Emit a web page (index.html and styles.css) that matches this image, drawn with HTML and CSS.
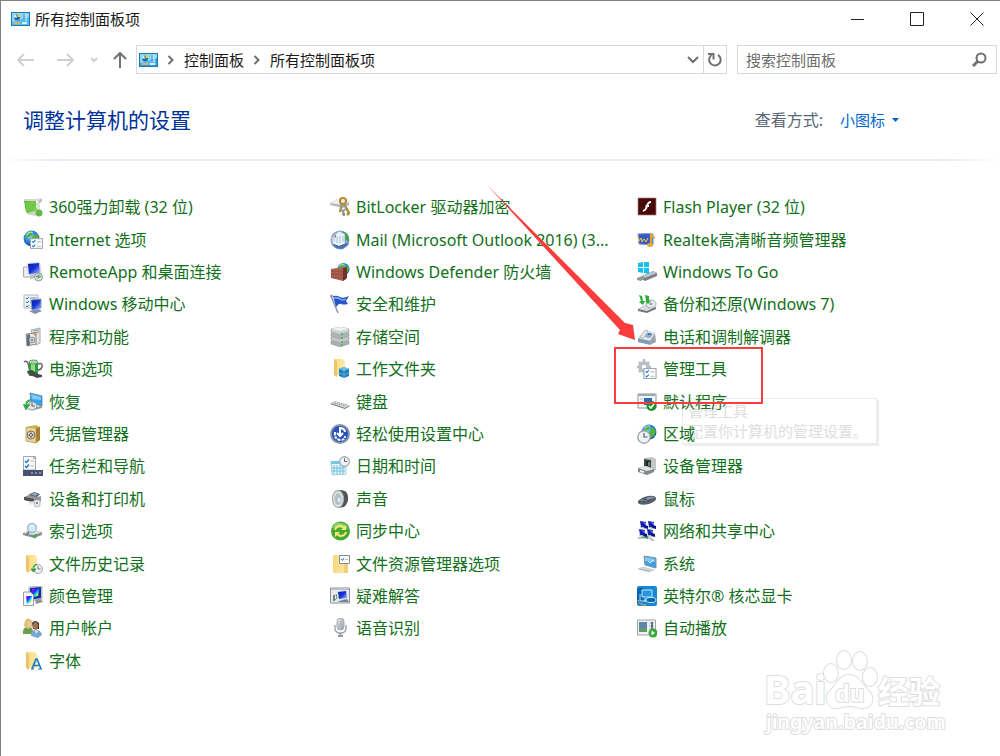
FILE: index.html
```html
<!DOCTYPE html>
<html lang="zh-CN">
<head>
  <meta charset="UTF-8">
  <meta name="viewport" content="width=device-width, initial-scale=1.0">
  <title>所有控制面板项</title>
  <link rel="stylesheet" href="styles.css">
</head>
<body>
  <!-- shared gradients and symbols -->
  <svg class="defs" aria-hidden="true">
    <defs>
      <linearGradient id="folder" x1="0" x2="1"><stop offset="0" stop-color="#f8d980"/><stop offset="1" stop-color="#ffe9a8"/></linearGradient>
      <linearGradient id="metal" x1="0" y1="0" x2="1" y2="1"><stop offset="0" stop-color="#f4f4f4"/><stop offset="1" stop-color="#8b9094"/></linearGradient>
      <linearGradient id="screen" x1="0" y1="0" x2="1" y2="1"><stop offset="0" stop-color="#0b1c9e"/><stop offset=".5" stop-color="#1734d8"/><stop offset="1" stop-color="#b9c9ff"/></linearGradient>
      <radialGradient id="globe" cx=".4" cy=".35" r=".7"><stop offset="0" stop-color="#9be0ff"/><stop offset=".5" stop-color="#2f83dc"/><stop offset="1" stop-color="#123f9c"/></radialGradient>
      <linearGradient id="rainbow" x1="0" y1="0" x2="1" y2="1"><stop offset="0" stop-color="#f0f"/><stop offset=".35" stop-color="#22f"/><stop offset=".6" stop-color="#0ee"/><stop offset=".8" stop-color="#fe0"/><stop offset="1" stop-color="#f33"/></linearGradient>
    </defs>
    <symbol id="panel" viewBox="0 0 19 14">
      <rect x=".5" y=".5" width="18" height="13" fill="#56bdf3" stroke="#1979b5"/>
      <path d="M1 1h17v4L1 10z" fill="#8ed6fa"/>
      <circle cx="6" cy="5.5" r="3" fill="#1e6fb4"/><path d="M6.500 5V2A3 3 0 0 1 9.500 5z" fill="#ffc62e"/><path d="M6 5.500H3A3 3 0 0 1 5 2.500z" fill="#e9f7ff"/>
      <path d="M12 3h4M12 5.500h4M12 8h4" stroke="#e9f7ff" stroke-width="1"/><path d="M13 2v7" stroke="#2b7fbf" stroke-width="1"/>
      <path d="M3 11h6" stroke="#ffb62e" stroke-width="1.500"/><path d="M11 11h5" stroke="#fff" stroke-width="1.500"/>
    </symbol>
    <symbol id="earth" viewBox="0 0 14 14">
      <circle cx="7" cy="7" r="6.500" fill="url(#globe)"/>
      <path d="M3 3l3-2 2 1-1 3-3 1-2 2zM8 5l3-2 2 3-1 4-3 2-2-3z" fill="#4fb53c"/>
      <path d="M3 4q2-3 5-2" stroke="#fff" stroke-opacity=".6" fill="none"/>
    </symbol>
    <symbol id="clock" viewBox="0 0 12 12">
      <circle cx="6" cy="6" r="5.300" fill="#eef2f4" stroke="#9aa5ab" stroke-width="1.200"/>
      <path d="M6 2.500V6H9" fill="none" stroke="#52606a"/>
    </symbol>
    <symbol id="list" viewBox="0 0 12 10">
      <rect x=".5" y=".5" width="11" height="9" fill="#fff" stroke="#a0a8ac"/>
      <path d="M2 3l1 1 2-2M2 7l1 1 2-2" fill="none" stroke="#1778d2"/><path d="M6.500 3.500H10M6.500 7.500H10" stroke="#b4bbc0"/>
    </symbol>
    <symbol id="monitor" viewBox="0 0 12 12">
      <path d="M.5 1l11-.5v8L2 9z" fill="#d9dde0" stroke="#8e969c" stroke-width=".6"/><path d="M1.500 2l9-.5v6L2.500 8z" fill="url(#screen)"/><path d="M5 9h3l1.500 2.500h-6z" fill="#a5acb1"/>
    </symbol>
    <symbol id="netpc" viewBox="0 0 8 8">
      <path d="M0 0l6 1v6L1 6z" fill="#1520b0"/><path d="M3 1l3 1v3z" fill="#6b82ee"/><path d="M5 4l3 1v3L4 7z" fill="#0c1580"/><path d="M0 6l5 1.500" stroke="#b4bbcf"/>
    </symbol>
  </svg>

  <div class="window">
    <header class="titlebar">
      <svg class="panel-icon"><use href="#panel"/></svg>
      <span class="title">所有控制面板项</span>
      <div class="window-buttons">
        <button type="button" aria-label="最小化"><svg viewBox="0 0 14 14"><path d="M1 7.500h13"/></svg></button>
        <button type="button" aria-label="最大化"><svg viewBox="0 0 14 14"><path d="M.5.5h13v13H.5z"/></svg></button>
        <button type="button" aria-label="关闭"><svg viewBox="0 0 14 14"><path d="M.5.5l13 13M13.500.5l-13 13"/></svg></button>
      </div>
    </header>

    <div class="toolbar">
      <div class="nav-buttons">
        <button type="button" aria-label="后退" disabled><svg width="17" height="16" viewBox="0 0 17 16"><path d="M1 8h16M7 2L1 8l6 6"/></svg></button>
        <button type="button" aria-label="前进" disabled><svg width="17" height="16" viewBox="0 0 17 16"><path d="M0 8h16M10 2l6 6-6 6"/></svg></button>
        <button type="button" aria-label="最近浏览的位置" disabled><svg width="8" height="16" viewBox="0 0 8 16"><path d="M1 6l3 3 3-3"/></svg></button>
        <button type="button" class="up" aria-label="上移"><svg width="14" height="16" viewBox="0 0 14 16"><path d="M7 16V1M1 7l6-6 6 6"/></svg></button>
      </div>
      <div class="address">
        <nav class="crumbs">
          <svg class="panel-icon"><use href="#panel"/></svg>
          <svg class="sep" viewBox="0 0 7 10"><path d="M1.500 1l4 4-4 4"/></svg>
          <a href="#">控制面板</a>
          <svg class="sep" viewBox="0 0 7 10"><path d="M1.500 1l4 4-4 4"/></svg>
          <a href="#">所有控制面板项</a>
        </nav>
        <button type="button" class="history" aria-label="以前的位置"><svg width="12" height="8" viewBox="0 0 12 8"><path d="M1 1l5 5 5-5"/></svg></button>
        <button type="button" class="refresh" aria-label="刷新"><svg width="16" height="16" viewBox="0 0 16 16"><path d="M11 2.800a5.800 5.800 0 1 1-6.500.2"/><path d="M1 2h5.500v5.500"/></svg></button>
      </div>
      <form class="search">
        <input type="text" placeholder="搜索控制面板" aria-label="搜索控制面板">
        <button type="submit" aria-label="搜索"><svg width="15" height="15" viewBox="0 0 15 15"><circle cx="9" cy="6" r="4.500"/><path d="M6 9l-5 5" stroke-width="3"/></svg></button>
      </form>
    </div>

    <section class="heading">
      <h1>调整计算机的设置</h1>
      <label for="view">查看方式:</label>
      <div class="view">
        <select id="view"><option>小图标</option></select>
        <svg width="7" height="4" viewBox="0 0 7 4"><path d="M0 0h7L3.500 4z"/></svg>
      </div>
    </section>

    <main class="items">
      <ul>
        <li><a href="#"><svg viewBox="0 0 20 20"><path d="M1 3h11l1 10-10 2z" fill="#3da52c"/><path d="M2 5l11-2v11L4 17z" fill="#73c848"/><path d="M1 2h12l5-1-3 3H1z" fill="#d4dad2"/><path d="M15 4l4-3v3l-3 3z" fill="#b9c0b9"/><path d="M13 5l4 1v8l-4-1z" fill="#dbe4d5"/><path d="M3 17l8-3 3 2-2 3z" fill="#cfd3cc"/><circle cx="16" cy="16" r="3.500" fill="#64b944"/><circle cx="12.500" cy="13" r="2" fill="#83cf59"/></svg>360强力卸载 (32 位)</a></li>
        <li><a href="#"><svg viewBox="0 0 20 20"><use href="#earth" width="17" height="17"/><use href="#list" x="7" y="8" width="13" height="11"/></svg>Internet 选项</a></li>
        <li><a href="#"><svg viewBox="0 0 20 20"><path d="M.5 5h7v10h-7z" fill="#eee" stroke="#aaa"/><path d="M4 1l13-1 2 12-14 1z" fill="#d5dae8"/><path d="M5 2l11-1 1 10-11 1z" fill="url(#screen)"/><path d="M7 13l7-1v4l-7 1z" fill="#b9c0c9"/><circle cx="15.500" cy="15" r="4" fill="#dfe3df" stroke="#8f9891"/><path d="M13 15l2-1.500v3M18 14l-2 1.500v-3" stroke="#3b9447" fill="none"/></svg>RemoteApp 和桌面连接</a></li>
        <li><a href="#"><svg viewBox="0 0 20 20"><path d="M1 1h14v13H1z" fill="#eef1f4" stroke="#b1b9c0"/><path d="M3 4l1 1 2-2M3 8l1 1 2-2M3 12l1 1 2-2" fill="none" stroke="#1778d2"/><path d="M7 4h7M7 8h3" stroke="#6a93d6"/><path d="M8 6l10-1v9l-9 2z" fill="url(#screen)" stroke="#8999b5"/><path d="M6 17l9-2 4 2-7 3z" fill="#7d91b0"/></svg>Windows 移动中心</a></li>
        <li><a href="#"><svg viewBox="0 0 20 20"><path d="M8 3l9-2v15l-4 2z" fill="#e3e5e6" stroke="#a5abb0"/><path d="M10 4l6-1M10 6l6-1" stroke="#8f979c"/><path d="M3 7l10-1v11l-9 2z" fill="#eee" stroke="#888"/><path d="M4 8l3-1v11l-3 1z" fill="#676e73"/><circle cx="9" cy="13" r="3" fill="#cce2ee" stroke="#8a9399"/><circle cx="9" cy="13" r="1" fill="#fff" stroke="#777"/><path d="M10 7h3v3z" fill="#dc8c38"/></svg>程序和功能</a></li>
        <li><a href="#"><svg viewBox="0 0 20 20"><path d="M1 3q2-2 4 1l2 9M15 5q5-2 4 3-1 3-4 3" fill="none" stroke="#666" stroke-width="1.500"/><path d="M6 3h9v14H6z" fill="#2ba13b"/><path d="M8 4h4v12H8z" fill="#8fde7f"/><ellipse cx="10.500" cy="3" rx="4.500" ry="2" fill="#9ddf95" stroke="#7d8b7d"/><path d="M4 12l5-1 6 4 4 1v2l-5 1-9-4z" fill="#464c4b"/></svg>电源选项</a></li>
        <li><a href="#"><svg viewBox="0 0 20 20"><path d="M7 1l12 3v10L8 11z" fill="#35a3ec" stroke="#46708f" stroke-width=".7"/><path d="M8 2l10 3v3l-9-1z" fill="#7ccbfa"/><path d="M8 16l11-2v2l-8 2z" fill="#8f979d"/><ellipse cx="9" cy="14" rx="5" ry="4" fill="#e2e6e7" stroke="#90999d"/><path d="M9 11v3h3" stroke="#59646a" fill="none"/><path d="M1 13h5l-3 4zM3 12q1-4 5-4" fill="#35a546" stroke="#35a546" stroke-width="1.500"/></svg>恢复</a></li>
        <li><a href="#"><svg viewBox="0 0 20 20"><path d="M3 3l10-2 4 2v13l-5 3-9-2z" fill="#d5b054"/><path d="M13 4l4-1v13l-4 3z" fill="#a67f2d"/><path d="M3 3l10 1v15L3 17z" fill="#edd391" stroke="#b4954c" stroke-width=".7"/><circle cx="8" cy="11" r="4" fill="#d9d6ca" stroke="#797465"/><path d="M8 7v8M4 11h8" stroke="#8d887b"/><circle cx="8" cy="11" r="1.500" fill="#eee" stroke="#655"/></svg>凭据管理器</a></li>
        <li><a href="#"><svg viewBox="0 0 20 20"><path d="M.5.5h12V14H.5z" fill="#f7f9fb" stroke="#a1a9b0"/><path d="M2 5l1.500 1.500L6 3.500M2 10l1.500 1.500L6 8.500" fill="none" stroke="#1675c9" stroke-width="1.300"/><path d="M7.500 5H11M7.500 10H11" stroke="#b0b6ba"/><path d="M0 14h20v6H0z" fill="#475270"/><path d="M8 16h2v2H8zM12 16h2v2h-2zM16 16h2v2h-2z" fill="#8692ae"/><path d="M10 2h2" stroke="#d55"/></svg>任务栏和导航</a></li>
        <li><a href="#"><svg viewBox="0 0 20 20"><path d="M5 6l6-3 6 2-4 4z" fill="#5b6265"/><path d="M8 5l3-1 4 1-3 2z" fill="#86b7d4"/><path d="M1 8l5-2 8 2 4-1v5l-6 2-11-3z" fill="#91979a"/><path d="M1 8l10 2v3L1 11z" fill="#4b5052"/><path d="M5 13l7-1v3l-5 1z" fill="#e5e7e8"/><path d="M11 11h6v6l-5 1z" fill="#e6eaed" stroke="#999" stroke-width=".6"/><circle cx="14" cy="14" r="1" fill="#667"/></svg>设备和打印机</a></li>
        <li><a href="#"><svg viewBox="0 0 20 20"><path d="M0 12l7-3 12 2v3l-8 3L0 14z" fill="#8b9195"/><path d="M0 12l7-3 12 2-8 3z" fill="#dfe2e4"/><path d="M10 15l2 1 1-3" stroke="#44a547" stroke-width="2" fill="none"/><circle cx="9" cy="7" r="4.500" fill="#cfe8fa" stroke="#9fb7c7" stroke-width="1.300"/><path d="M7 5q2-2 4 0" stroke="#fff" fill="none"/><path d="M6 11l-3 3" stroke="#777f85" stroke-width="2"/></svg>索引选项</a></li>
        <li><a href="#"><svg viewBox="0 0 20 20"><path d="M3 1h9l2 2v15l-10-1z" fill="url(#folder)"/><path d="M3 1l3 3v15l-3-2z" fill="#e9c468"/><use href="#clock" x="10" y="10" width="10" height="10"/><path d="M8 15h5l-2.500 3zM10 14q1-4 4-4" fill="#2ca43e" stroke="#2ca43e"/></svg>文件历史记录</a></li>
        <li><a href="#"><svg viewBox="0 0 20 20"><path d="M6 1l13-1v13l-13 2z" fill="#d8dadd" stroke="#888" stroke-width=".6"/><path d="M7 2l11-1v11L7 14z" fill="#1a2eb2"/><path d="M9 3h7l-1 7-5 1z" fill="url(#rainbow)"/><path d="M12 14l6-1 2 3-7 2z" fill="#8e969a"/><path d="M.5 6h7l3 3v10.500H.5z" fill="#f5f7fb" stroke="#969ca4"/><path d="M3 10h6l-1 6-4 2z" fill="url(#rainbow)"/></svg>颜色管理</a></li>
        <li><a href="#"><svg viewBox="0 0 20 20"><path d="M0 14q0-5 5-5t5 5v2H0z" fill="#6aa04c"/><path d="M2 3q3-5 7 0v6l-4 2-4-3z" fill="#d9bd6b"/><ellipse cx="6" cy="6" rx="2.500" ry="3.500" fill="#edc398"/><path d="M8 18q0-6 5-6t6 5l-4 3z" fill="#77a7d4"/><path d="M9 5q3-4 7 0v6h-6z" fill="#3f352d"/><ellipse cx="12.500" cy="8" rx="2.500" ry="4" fill="#a77346"/><path d="M12 12l1 4 2-3z" fill="#e8f1fb"/></svg>用户帐户</a></li>
        <li><a href="#"><svg viewBox="0 0 20 20"><path d="M3 1h9l2 2v14H4z" fill="url(#folder)"/><path d="M3 1l3 3v15l-3-2z" fill="#e9c468"/><path d="M9 18l4-10h1l4 10M10.500 14.500h6" fill="none" stroke="#177cc4" stroke-width="1.700"/><path d="M8 18h3M15 18h4" stroke="#177cc4"/></svg>字体</a></li>
      </ul>

      <ul>
        <li><a href="#"><svg viewBox="0 0 20 20"><path d="M0 6l7-4 12 3v3l-6 3L0 8z" fill="#b7bbbd"/><path d="M0 6l7-4 12 3-6 3z" fill="#eef0f1"/><circle cx="13" cy="4" r="3" fill="none" stroke="#b18a2a" stroke-width="2"/><path d="M12 7l-2 8M14 7l5 9-2 2" fill="none" stroke="#b78b2e" stroke-width="2.500"/><circle cx="13" cy="11" r="2.500" fill="none" stroke="#969ea2" stroke-width="1.500"/><path d="M13 13l1 6M12 17h3" stroke="#899398" stroke-width="2"/></svg>BitLocker 驱动器加密</a></li>
        <li><a href="#"><svg viewBox="0 0 20 20"><circle cx="10" cy="10" r="9.500" fill="#8aa9cf"/><path d="M12 1q8 2 7 11l-4-3z" fill="#3aa64c"/><path d="M2 7l7-6 6 3v9l-6 3-7-3z" fill="#eaf2fa" stroke="#809dbf" stroke-width=".7"/><path d="M4 6v6M7 6v7M10 6v7M13 6v6" stroke="#abc2db"/><path d="M4 6l2-1v3z" fill="#d94d52"/><path d="M2 13l7 3 6-3 4 1-7 5-6-1z" fill="#4c70a8"/><path d="M3 13l6 2 6-2" stroke="#fff" fill="none"/></svg>Mail (Microsoft Outlook 2016) (3...</a></li>
        <li><a href="#"><svg viewBox="0 0 20 20"><use href="#earth" x="7" y="0" width="13" height="14"/><path d="M1 7l12-2 3 1v11l-3 2-12-3z" fill="#a85f4e"/><path d="M13 6l4-1v11l-4 3z" fill="#6f3228"/><path d="M1 9l12 1M1 12l12 1M1 15l12 1" stroke="#874437" stroke-width=".6"/></svg>Windows Defender 防火墙</a></li>
        <li><a href="#"><svg viewBox="0 0 20 20"><path d="M1 2l7 17" stroke="#8999ae" stroke-width="1.500"/><path d="M3 2q4-1 7 1t9-1l-3 5 2 3q-5 1-7 0t-5 3z" fill="#2855c8"/><path d="M4 4q3-1 6 1t6 0" stroke="#88b4fa" fill="none" stroke-width="1.500"/><circle cx="1.500" cy="2" r="1.200" fill="#7a8796"/></svg>安全和维护</a></li>
        <li><a href="#"><svg viewBox="0 0 20 20"><g stroke="#959c9f" stroke-width=".6"><path d="M1 14l10-2 8 2v3l-9 3-9-3z" fill="#a9afb2"/><path d="M1 10l10-2 8 2v3l-9 3-9-3z" fill="#c2c7c9"/><path d="M1 6l10-2 8 2v3l-9 3-9-3z" fill="#aeb4b7"/><path d="M1 2l10-2 8 2v3l-9 3-9-3z" fill="#cbd0d2"/></g><path d="M1 2l10-2 8 2-9 2z" fill="#eff1f2"/><path d="M11 7h2M11 11h2M11 15h2M11 18h2" stroke="#45b847" stroke-width="1.500"/></svg>存储空间</a></li>
        <li><a href="#"><svg viewBox="0 0 20 20"><path d="M4 0h8l3 2v14H5z" fill="url(#folder)"/><path d="M4 0l3 3v15l-3-2z" fill="#e9c468"/><path d="M9 10l5-2 5 2v7l-5 2-5-2z" fill="#2180bd"/><path d="M9 10l5-2 5 2-5 2z" fill="#68c0eb"/><path d="M14 12v7M9 14l5 2 5-2" stroke="#82c8ea" stroke-width=".6" fill="none"/></svg>工作文件夹</a></li>
        <li><a href="#"><svg viewBox="0 0 20 20"><path d="M0 12l4-2 16 4-5 3z" fill="#74797d"/><path d="M0 11l4-2 16 4-5 3z" fill="#d7dadc"/><path d="M3 11l12 3M5 10l12 3" stroke="#8c9499" stroke-dasharray="1 1"/></svg>键盘</a></li>
        <li><a href="#"><svg viewBox="0 0 20 20"><circle cx="10" cy="10" r="9" fill="#2852bd" stroke="#8796ab" stroke-width="2"/><path d="M5 8q-1 8 6 8 4 0 4-4" fill="none" stroke="#fff" stroke-width="2" stroke-dasharray="3 1"/><path d="M10 3v9M7 9l3 3 3-3M11 4q4 1 4 4" stroke="#fff" stroke-width="2" fill="none"/></svg>轻松使用设置中心</a></li>
        <li><a href="#"><svg viewBox="0 0 20 20"><path d="M1 6h15v12l-14 1z" fill="#eaf6fa" stroke="#a5cbd9"/><path d="M1 5h15v3H1z" fill="#76c9e4"/><path d="M4 9v9M7 9v9M10 9v9M13 9v9M2 12h13M2 15h13" stroke="#68c0df"/><use href="#clock" x="9" y="0" width="11" height="11"/></svg>日期和时间</a></li>
        <li><a href="#"><svg viewBox="0 0 20 20"><path d="M8 1q9-1 10 6t-4 11l-6 1z" fill="#4f5558"/><ellipse cx="8" cy="10" rx="5.500" ry="8.500" fill="#e4e7e8" stroke="#a9aeb1" stroke-width="1.300"/><ellipse cx="8" cy="10" rx="3.500" ry="6" fill="#b1c0c8"/><ellipse cx="9" cy="11" rx="2" ry="3" fill="#ddecf3" stroke="#8f9fa7" stroke-width=".5"/></svg>声音</a></li>
        <li><a href="#"><svg viewBox="0 0 20 20"><circle cx="10.500" cy="10" r="9.500" fill="#45a934"/><path d="M2 7q3-6 9-5t7 6q-6-3-16-1z" fill="#8cd46b"/><path d="M5 9q1-4 6-4l3 2M16 11q-1 4-6 4l-3-2" fill="none" stroke="#ffe873" stroke-width="2"/><path d="M16 4v5h-5zM5 16v-5h5z" fill="#ffe873"/></svg>同步中心</a></li>
        <li><a href="#"><svg viewBox="0 0 20 20"><path d="M3 1h14v18H3z" fill="url(#folder)"/><path d="M14 9h4v10h-4z" fill="#f0cf7a"/><path d="M9.500 1.500h10v8h-10z" fill="#fff" stroke="#858b90"/><path d="M11 5l1.500 1.500L14 4" stroke="#1b75c9" fill="none"/><path d="M15 5.500h3" stroke="#b9bec4"/></svg>文件资源管理器选项</a></li>
        <li><a href="#"><svg viewBox="0 0 20 20"><path d="M.5 2h19v15H.5z" fill="#e7eaf0" stroke="#8b929d"/><path d="M1 2h18v2H1z" fill="#b9c0cb"/><path d="M7 5l10-1v10l-9 1z" fill="#e1e5eb"/><path d="M8 6l8-1 1 7-8 1z" fill="url(#screen)"/><path d="M9 15l8-2 2 3H8z" fill="#7b8390"/><path d="M4 9v6" stroke="#778478" stroke-width="2"/><path d="M6 8l1 4-2 2" stroke="#45a647" fill="none"/></svg>疑难解答</a></li>
        <li><a href="#"><svg viewBox="0 0 20 20"><rect x="7" y="0" width="7" height="12" rx="3.500" fill="url(#metal)" stroke="#a5acb6"/><path d="M7 4h7M7 6.500h7M7 9h7M10.500 1v10" stroke="#b5bcc7" stroke-width=".6"/><path d="M5 7v3q0 5 5.500 5T16 10V7" fill="none" stroke="#a2a8b3" stroke-width="1.500"/><path d="M10.500 15v4M8 18h5" stroke="#959ca6" stroke-width="1.800"/></svg>语音识别</a></li>
      </ul>

      <ul>
        <li><a href="#"><svg viewBox="0 0 20 20"><path d="M1 1h18v17H1z" fill="#4a0808" stroke="#998282" stroke-width=".7"/><path d="M14 5q-3 0-4 4t-4 5M8.500 9H12" stroke="#fff" stroke-width="1.800" fill="none"/></svg>Flash Player (32 位)</a></li>
        <li><a href="#"><svg viewBox="0 0 20 20"><path d="M1 4q8-1 15 0v11l-14-1z" fill="#3659c4" stroke="#8493d0"/><path d="M1 7l1 4 2-3 1 4 2-3 2 3 2-4" fill="none" stroke="#f2cf45"/><path d="M14 4v10M14 4q1 3 4 4" stroke="#e5a62e" stroke-width="2" fill="none"/><ellipse cx="13" cy="15" rx="3" ry="2" fill="#e8ae37"/></svg>Realtek高清晰音频管理器</a></li>
        <li><a href="#"><svg viewBox="0 0 20 20"><path d="M5 14l11-5 4 2v3l-12 5-3-2z" fill="#777f84"/><path d="M5 14l11-5 4 2-12 5z" fill="#bac2c7"/><path d="M0 16l5-2 3 2-4 3-4-1z" fill="#92999e"/><path d="M1 1l5-1v5H1zM7 0l5-1v6H7zM1 6h5v5l-5-1zM7 6h5v6l-5-1z" fill="#15bfef"/></svg>Windows To Go</a></li>
        <li><a href="#"><svg viewBox="0 0 20 20"><path d="M1 15l7-4 11 2v2l-9 4-9-2z" fill="#6f7579"/><path d="M1 15l7-4 11 2-9 4z" fill="#d7dcde"/><ellipse cx="14" cy="10" rx="5" ry="4" fill="#e6eaeb" stroke="#a4abb0"/><ellipse cx="14" cy="10" rx="1.500" ry="1" fill="#889095"/><path d="M2 1l3 1 1 5h2l-2 4-4-3 2-1zM8 1l4 1v5h2l-3 3-3-3h1z" fill="#2fad3a"/></svg>备份和还原(Windows 7)</a></li>
        <li><a href="#"><svg viewBox="0 0 20 20"><path d="M1 11l7-8 10 3 1 9-6 3-12-3z" fill="#9ba3aa"/><path d="M1 11l7-8 10 3-5 8z" fill="#e1e5e8"/><path d="M3 10l6-7 2 1-5 7z" fill="#f2f2f2" stroke="#8c959b" stroke-width=".6"/><path d="M10 6l6 1-3 4-5-1z" fill="#8fa9be"/><path d="M11 6h3v2h-3z" fill="#2783d3"/><path d="M1 12l12 2v3L1 15z" fill="#7b9db8"/></svg>电话和调制解调器</a></li>
        <li><a href="#"><svg viewBox="0 0 20 20"><circle cx="7" cy="8" r="4" fill="none" stroke="#b4bec5" stroke-width="3.500"/><path d="M7 0v3M7 13v3M0 8h2M12 8h2M2 3l2 2M12 3l-2 2M2 13l2-2" stroke="#b4bec5" stroke-width="2.500"/><use href="#list" x="6" y="9" width="14" height="11"/></svg>管理工具</a></li>
        <li><a href="#"><svg viewBox="0 0 20 20"><path d="M1 2h18v14H1z" fill="#f4f6f8" stroke="#8b959c"/><path d="M1 2h17v2H1z" fill="#9aa7b0"/><path d="M3 7h3M3 10h3" stroke="#b5bdc3"/><path d="M7 6h8v7H7z" fill="#2b69bc"/><circle cx="14.500" cy="14" r="5" fill="#169226"/><path d="M12 14l2 2 3-4" fill="none" stroke="#fff" stroke-width="1.600"/></svg>默认程序</a></li>
        <li><a href="#"><svg viewBox="0 0 20 20"><use href="#earth" x="4" y="0" width="16" height="16"/><use href="#clock" x="0" y="6" width="14" height="14"/></svg>区域</a></li>
        <li><a href="#"><svg viewBox="0 0 20 20"><path d="M7 2l8-1 4 2v11l-4 2-8-2z" fill="#c1c6c9"/><path d="M7 3l7 1v9l-7-1z" fill="#42494c"/><path d="M9 5h4v5H9z" fill="#1b2526"/><path d="M12 6v4" stroke="#69b95d" stroke-width="1.500"/><path d="M1 12l8-2 8 3v3l-7 3-9-3z" fill="#7f878b"/><path d="M1 12l8-2 8 3-7 2z" fill="#e2e4e5"/><path d="M3 15l4 1" stroke="#eee" stroke-width="2"/></svg>设备管理器</a></li>
        <li><a href="#"><svg viewBox="0 0 20 20"><path d="M1 12q4-4 10-5 7-1 8 2t-7 6q-9 2-11-1z" fill="#535f6c"/><path d="M3 12q4-3 9-4 5-1 6 1-5 0-8 3z" fill="#8a96a3"/><path d="M6 10l7 2M9 9l-3 4" stroke="#303a45" stroke-width=".8"/></svg>鼠标</a></li>
        <li><a href="#"><svg viewBox="0 0 20 20"><path d="M1 17l10-1 6 4" stroke="#b7bdc1" stroke-width="2" fill="none"/><path d="M3 16l8-1v3z" fill="#35a345"/><use href="#netpc" x="3" y="0" width="8" height="8"/><use href="#netpc" x="11" y="0" width="8" height="8"/><use href="#netpc" x="2" y="8" width="8" height="8"/><use href="#netpc" x="10" y="8" width="8" height="8"/></svg>网络和共享中心</a></li>
        <li><a href="#"><svg viewBox="0 0 20 20"><path d="M7 2l12 2v10L8 11z" fill="#3aa0e7" stroke="#80929f"/><path d="M8 3l10 2v3L8 7z" fill="#7dcaf8"/><path d="M11 7l2 2 3-3" fill="none" stroke="#fff"/><path d="M1 15l5-2 11 3-5 2z" fill="#d8dfe3" stroke="#b0b9c0" stroke-width=".6"/><path d="M3 15l10 2" stroke="#a7b1b8"/></svg>系统</a></li>
        <li><a href="#"><svg viewBox="0 0 20 20"><rect width="20" height="20" rx="2" fill="#1787d2"/><path d="M0 3q8-4 8 5T0 17z" fill="#0865b4"/><path d="M5 4h10v7H5z" fill="#2198df" stroke="#c1e8fb"/><path d="M3 8v7h10M8 12v3M7 15h5" stroke="#b5e1f5" fill="none"/><ellipse cx="14" cy="14" rx="5" ry="2.500" fill="#0a65a7" stroke="#bfe9fb"/><path d="M1 14q1 5 8 5" stroke="#f3b248" fill="none"/></svg>英特尔® 核芯显卡</a></li>
        <li><a href="#"><svg viewBox="0 0 20 20"><path d="M.5 2h18v15H.5z" fill="#f0f1f1" stroke="#9ea5a9"/><path d="M2 4h8v10H2z" fill="#5a87ae"/><path d="M2 10h8v4H2z" fill="#629b72"/><path d="M12 5h5M12 8h5M12 11h5" stroke="#adb9c3"/><path d="M15 4v7" stroke="#344c62" stroke-width="1.500"/><circle cx="16" cy="15" r="4.500" fill="#37a83b"/><path d="M14.500 12.500L18 15l-3.500 2.500z" fill="#fff"/></svg>自动播放</a></li>
      </ul>

      <div class="tooltip" role="tooltip">管理工具<br>配置你计算机的管理设置。</div>
      <div class="marker"></div>
      <svg class="arrow" viewBox="0 0 149 156" aria-hidden="true"><path d="M0 0l138 138 8 2 2 15-17-6 2-4z"/></svg>
    </main>

    <svg class="watermark" viewBox="0 0 184 90" role="img" aria-label="Baidu 经验 jingyan.baidu.com">
      <g class="letters">
        <text x="1" y="55" class="brand">Bai</text>
        <path d="M86 26c-10 0-13 11-19 16-6 6-3 17 6 17 6 0 8-2 13-2s8 2 14 2c10 0 12-11 6-17-6-5-10-16-20-16z"/>
        <ellipse cx="68" cy="24" rx="7" ry="9"/><ellipse cx="81" cy="11" rx="7" ry="9"/><ellipse cx="97" cy="12" rx="7" ry="9"/><ellipse cx="107" cy="28" rx="7" ry="9"/>
        <text x="72" y="53" class="du">du</text>
        <text x="115" y="54" class="cn">经验</text>
        <text x="3" y="80" class="url">jingyan.baidu.com</text>
      </g>
    </svg>
  </div>
</body>
</html>
```

FILE: styles.css
```css
* {
  box-sizing: border-box;
}

body {
  margin: 0;
  font-family: "Noto Sans", "Noto Sans CJK SC", sans-serif;
  font-size: 15px;
  line-height: 20px;
  color: #1a1a1a;
  background: #fff;
}

button, input, select {
  font: inherit;
  border: none;
  padding: 0;
  background: none;
}

button {
  display: flex;
  align-items: center;
  justify-content: center;
}

a {
  color: inherit;
  text-decoration: none;
}

.defs {
  position: absolute;
  width: 0;
  height: 0;
}

.window {
  position: relative;
  display: flex;
  flex-direction: column;
  min-height: 100vh;
  border-top: 1px solid #808080;
  border-left: 1px solid #808080;
}

.panel-icon {
  width: 19px;
  height: 14px;
  flex: none;
}

/* title bar */
.titlebar {
  display: flex;
  align-items: center;
  gap: 5px;
  height: 36px;
  padding: 0 16px 0 10px;
}

.window-buttons {
  display: flex;
  gap: 46px;
  margin-left: auto;
}

.window-buttons svg {
  width: 14px;
  height: 14px;
  fill: none;
  stroke: #222;
}

/* address row */
.toolbar {
  display: flex;
  align-items: center;
  padding: 8px 3px 0 16px;
}

.toolbar svg {
  fill: none;
  stroke: #707070;
  stroke-width: 2;
}

.toolbar .panel-icon {
  stroke: none;
}

.nav-buttons {
  display: flex;
  align-items: center;
  width: 119px;
  flex: none;
}

.nav-buttons button {
  margin-right: 23px;
}

.nav-buttons button:nth-child(2) {
  margin-right: 16px;
}

.nav-buttons button:nth-child(3) {
  margin-right: 15px;
}

.nav-buttons .up {
  margin-right: 0;
}

.nav-buttons button:disabled svg {
  stroke: #d0d0d0;
}

.address {
  display: flex;
  flex: 1;
  height: 29px;
  border: 1px solid #d9d9d9;
}

.crumbs {
  display: flex;
  flex: 1;
  align-items: center;
  padding-left: 2px;
}

.sep {
  width: 7px;
  height: 10px;
  margin: 0 10px 0 9px;
}

.history {
  width: 20px;
}

.refresh {
  width: 23px;
  border-left: 1px solid #d9d9d9;
}

.search {
  display: flex;
  width: 260px;
  height: 29px;
  margin-left: 10px;
  padding: 0 9px 0 8px;
  border: 1px solid #d9d9d9;
}

.search input {
  flex: 1;
  min-width: 0;
  outline: none;
}

.search input::placeholder {
  color: #6d6d6d;
  opacity: 1;
}

/* heading */
.heading {
  display: flex;
  align-items: center;
  height: 87px;
  padding: 7px 101px 0 22px;
  border-bottom: 2px solid;
  border-image: linear-gradient(to right, #fff, #e2ecf8 6%, #e2ecf8 94%, #fff) 1;
}

.heading h1 {
  flex: 1;
  margin: 0;
  font-size: 21px;
  font-weight: 400;
  line-height: 28px;
  color: #003399;
}

.heading label {
  font-size: 16px;
  color: #5a6675;
}

.view {
  display: flex;
  align-items: center;
  gap: 6px;
  margin-left: 17px;
}

.view select {
  appearance: none;
  color: #0066cc;
}

.view svg {
  fill: #0066cc;
}

/* items */
.items {
  position: relative;
  isolation: isolate;
  display: grid;
  grid-template-columns: repeat(3, minmax(0, 307px));
  flex: 1;
  padding: 30px 0 79px 22px;
}

.items ul {
  display: grid;
  grid-template-rows: repeat(15, 1fr);
  margin: 0;
  padding: 0;
  list-style: none;
}

.items li {
  display: flex;
  align-items: center;
}

.items a {
  display: flex;
  align-items: center;
  gap: 6px;
  font-size: 16px;
  color: #12701a;
  white-space: nowrap;
}

.items a:hover {
  text-decoration: underline;
}

.items a svg {
  width: 20px;
  height: 20px;
  flex: none;
}

.tooltip {
  position: absolute;
  z-index: -1;
  left: 681px;
  top: 237px;
  padding: 2px 8px 2px 5px;
  border: 1px solid #ebebeb;
  box-shadow: 2px 2px 1px #eee;
  color: #dedede;
  background: #fff;
}

.marker {
  position: absolute;
  left: 613px;
  top: 186px;
  width: 149px;
  height: 57px;
  border: 2px solid #fa3c3c;
  pointer-events: none;
}

.arrow {
  position: absolute;
  left: 486px;
  top: 24px;
  width: 149px;
  height: 156px;
  fill: #fa3c3c;
  pointer-events: none;
}

/* watermark */
.watermark {
  position: absolute;
  right: 53px;
  bottom: 17px;
  width: 184px;
  height: 90px;
  pointer-events: none;
}

.letters {
  fill: #fff;
  stroke: #dedede;
  stroke-width: 2;
  paint-order: stroke;
}

.letters text {
  font-weight: 700;
}

.brand {
  font-size: 40px;
}

.du {
  font-size: 23px;
}

.cn {
  font-size: 31px;
}

.letters .url {
  font-size: 20px;
  font-weight: 600;
}
```
